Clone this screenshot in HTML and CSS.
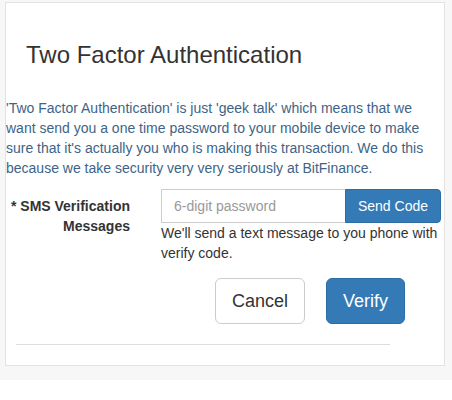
FILE: index.html
```html
<!DOCTYPE html>
<html lang="en">
  <head>
    <meta charset="UTF-8" />
    <meta name="viewport" content="width=device-width, initial-scale=1.0" />
    <title>Two Factor Authentication</title>

    <link rel="stylesheet" href="styles.css">
  </head>
  <body>
    <div class="page">
      <div class="card">
        <h2 class="card-title">Two Factor Authentication</h2>

        <p class="intro">
          'Two Factor Authentication' is just 'geek talk' which means that we
          want send you a one time password to your mobile device to make sure
          that it's actually you who is making this transaction. We do this
          because we take security very very seriously at BitFinance.
        </p>

        <div class="form-row">
          <label class="control-label" for="sms-code">* SMS Verification Messages</label>
          <div class="control">
            <div class="input-group">
              <input type="text" id="sms-code" class="form-input" placeholder="6-digit password" />
              <button class="btn btn-addon">Send Code</button>
            </div>
            <div class="help-block">We'll send a text message to you phone with verify code.</div>
          </div>
        </div>

        <div class="actions">
          <button class="btn btn-lg btn-default">Cancel</button>
          <button class="btn btn-lg btn-primary">Verify</button>
        </div>

        <hr class="divider" />
      </div>
    </div>
  </body>
</html>
```

FILE: styles.css
```css
body {
  margin: 0;
  font-family: "Liberation Sans", Arial, sans-serif;
  font-size: 14px;
  line-height: 20px;
  color: #333;
  background-color: #fff;
}
.page {
  background-color: #f7f7f7;
  padding: 2px 7px 14px 5px;
}
.card {
  background-color: #fff;
  border: 1px solid #e3e3e3;
  padding-bottom: 20px;
}
.card-title {
  margin: 39px 0 0 20px;
  font-size: 24px;
  line-height: 26px;
  font-weight: normal;
  color: #333;
}
.intro {
  margin: 30px 0 0 0;
  color: #3d6487;
}
.form-row {
  display: flex;
  margin-top: 11px;
}
.control-label {
  width: 124px;
  padding-top: 7px;
  margin-right: 31px;
  text-align: right;
  font-weight: bold;
}
.control {
  width: 280px;
}
.input-group {
  display: flex;
  height: 34px;
}
.form-input {
  flex: 1;
  min-width: 0;
  box-sizing: border-box;
  height: 34px;
  padding: 6px 12px;
  border: 1px solid #ccc;
  border-right: 0;
  border-radius: 0;
  font-family: inherit;
  font-size: 14px;
  color: #555;
}
.form-input::placeholder {
  color: #999;
}
.btn {
  font-family: inherit;
  cursor: pointer;
  border: 1px solid transparent;
}
.btn-addon {
  padding: 6px 12px;
  font-size: 14px;
  line-height: 20px;
  color: #fff;
  background-color: #337ab7;
  border-color: #2e6da4;
  border-radius: 0 4px 4px 0;
}
.help-block {
  width: 290px;
  color: #333;
}
.actions {
  display: flex;
  justify-content: flex-end;
  gap: 21px;
  margin-top: 15px;
  padding-right: 39px;
}
.btn-lg {
  padding: 10px 16px;
  font-size: 18px;
  line-height: 24px;
  border-radius: 6px;
}
.btn-default {
  color: #333;
  background-color: #fff;
  border-color: #ccc;
}
.btn-primary {
  color: #fff;
  background-color: #337ab7;
  border-color: #2e6da4;
}
.divider {
  margin: 20px 54px 0 10px;
  border: 0;
  border-top: 1px solid #ddd;
}
```
